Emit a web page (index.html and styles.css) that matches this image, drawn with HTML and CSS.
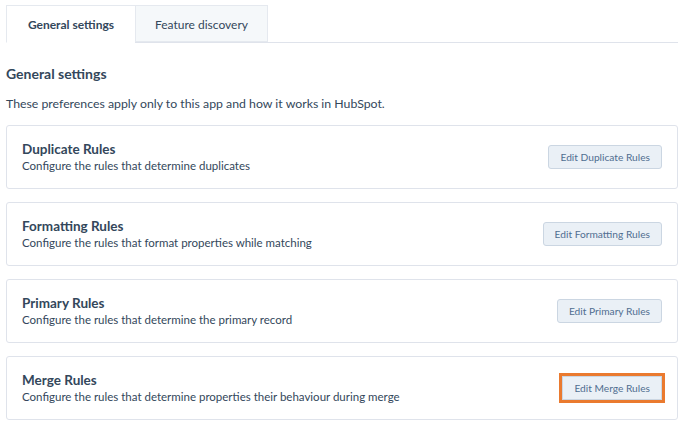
FILE: index.html
```html
<!DOCTYPE html>
<html>
<head>
<meta charset="utf-8">
<link rel="stylesheet" href="styles.css">
</head>
<body>
<div class="page">
  <div class="tabs">
    <div class="tab active">General settings</div>
    <div class="tab">Feature discovery</div>
  </div>
  <h2 class="heading">General settings</h2>
  <p class="intro">These preferences apply only to this app and how it works in HubSpot.</p>
  <div class="cards">
    <div class="card">
      <div class="card-text">
        <div class="card-title">Duplicate Rules</div>
        <div class="card-desc">Configure the rules that determine duplicates</div>
      </div>
      <button class="btn">Edit Duplicate Rules</button>
    </div>
    <div class="card">
      <div class="card-text">
        <div class="card-title">Formatting Rules</div>
        <div class="card-desc">Configure the rules that format properties while matching</div>
      </div>
      <button class="btn">Edit Formatting Rules</button>
    </div>
    <div class="card">
      <div class="card-text">
        <div class="card-title">Primary Rules</div>
        <div class="card-desc">Configure the rules that determine the primary record</div>
      </div>
      <button class="btn">Edit Primary Rules</button>
    </div>
    <div class="card">
      <div class="card-text">
        <div class="card-title">Merge Rules</div>
        <div class="card-desc">Configure the rules that determine properties their behaviour during merge</div>
      </div>
      <button class="btn highlight">Edit Merge Rules</button>
    </div>
  </div>
</div>
</body>
</html>
```
FILE: styles.css
```css
* { box-sizing: border-box; }
html, body { margin: 0; padding: 0; background: #fff; }
body {
  font-family: Lato, "Noto Sans", sans-serif;
  color: #33475b;
}
.page {
  padding: 5px 10px 0 6px;
}
.tabs {
  display: flex;
  border-bottom: 1px solid #dfe3eb;
  height: 38px;
}
.tab {
  height: 38px;
  display: flex;
  align-items: center;
  justify-content: center;
  font-size: 12px;
  border: 1px solid #e5e9ef;
  background: #f5f8fa;
  color: #33475b;
  padding-top: 1px;
}
.tab.active {
  width: 129px;
  background: #fff;
  font-weight: 700;
  border-bottom: 1px solid #fff;
  border-right: none;
  height: 38px;
}
.tab:not(.active) {
  width: 133px;
  height: 37px;
}
.heading {
  margin: 22px 0 0;
  font-size: 14px;
  font-weight: 700;
  line-height: 18px;
}
.intro {
  margin: 13px 0 0;
  font-size: 12.3px;
  line-height: 16px;
}
.cards {
  margin-top: 13px;
  display: flex;
  flex-direction: column;
  gap: 13px;
}
.card {
  height: 64px;
  border: 1px solid #dfe3eb;
  border-radius: 3px;
  display: flex;
  align-items: center;
  justify-content: space-between;
  padding: 0 15px;
}
.card-title {
  font-size: 13.5px;
  font-weight: 700;
  line-height: 17px;
}
.card-desc {
  font-size: 11.5px;
  line-height: 16px;
}
.btn {
  font-family: inherit;
  font-size: 10.2px;
  color: #506e91;
  background: #eaf0f6;
  border: 1px solid #cbd6e2;
  border-radius: 3px;
  height: 24px;
  padding: 0 11px;
}
.btn.highlight {
  outline: 3px solid #ea7a2f;
  outline-offset: 0;
  border-radius: 0;
}
```
